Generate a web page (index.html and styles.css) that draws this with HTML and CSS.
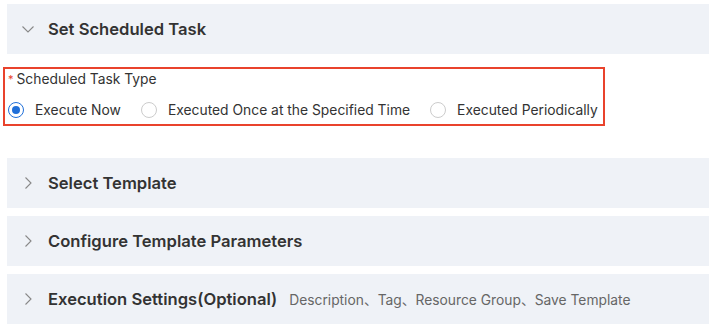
FILE: index.html
```html
<!DOCTYPE html>
<html lang="en">
<head>
  <meta charset="UTF-8" />
  <title>Set Scheduled Task</title>
  <link rel="stylesheet" href="styles.css">
</head>
<body>
  <div class="steps">
    <section class="step open">
      <div class="step-head">
        <svg class="chev" viewBox="0 0 12 12"><polyline points="0.5,3.5 6,9 11.5,3.5" /></svg>
        <h2>Set Scheduled Task</h2>
      </div>
      <div class="step-body">
        <div class="field">
          <label class="field-label"><span class="req">*</span>Scheduled Task Type</label>
          <div class="radios">
            <label class="radio checked"><span class="dot"></span>Execute Now</label>
            <label class="radio"><span class="dot"></span>Executed Once at the Specified Time</label>
            <label class="radio"><span class="dot"></span>Executed Periodically</label>
          </div>
        </div>
      </div>
    </section>

    <section class="step">
      <div class="step-head">
        <svg class="chev" viewBox="0 0 12 12"><polyline points="3.5,0.5 9,6 3.5,11.5" /></svg>
        <h2>Select Template</h2>
      </div>
    </section>

    <section class="step">
      <div class="step-head">
        <svg class="chev" viewBox="0 0 12 12"><polyline points="3.5,0.5 9,6 3.5,11.5" /></svg>
        <h2>Configure Template Parameters</h2>
      </div>
    </section>

    <section class="step">
      <div class="step-head">
        <svg class="chev" viewBox="0 0 12 12"><polyline points="3.5,0.5 9,6 3.5,11.5" /></svg>
        <h2>Execution Settings(Optional)</h2>
        <span class="hint">Description、Tag、Resource Group、Save Template</span>
      </div>
    </section>
  </div>
</body>
</html>
```

FILE: styles.css
```css
* {
  margin: 0;
  padding: 0;
  box-sizing: border-box;
}
body {
  font-family: Inter, "Noto Sans CJK SC", sans-serif;
  background: #fff;
  color: #333;
  padding: 4px 8px 0 7px;
}
.steps {
  width: 702px;
  display: flex;
  flex-direction: column;
  gap: 8px;
}
.step-head {
  height: 50px;
  background: #eff2f7;
  display: flex;
  align-items: center;
  padding-left: 15px;
  white-space: nowrap;
}
.chev {
  width: 12px;
  height: 12px;
  margin-right: 14px;
  fill: none;
  stroke: #888;
  stroke-width: 1.1;
}
.step-head h2 {
  font-size: 16.6px;
  font-weight: 600;
  color: #333;
}
.hint {
  margin-left: 12px;
  font-size: 13.8px;
  color: #666;
}
.step-body {
  padding: 13px 0 24px 0;
}
.field {
  margin-left: -4px;
  width: 602px;
  border: 2.5px solid #e9432c;
  padding: 1px 0 6px 3px;
}
.field-label {
  display: block;
  font-size: 13.8px;
  line-height: 18px;
  color: #333;
}
.req {
  color: #e9432c;
  font-size: 11px;
  vertical-align: top;
  margin-right: 3px;
}
.radios {
  display: flex;
  gap: 20px;
  margin-top: 14px;
  white-space: nowrap;
}
.radio {
  display: flex;
  align-items: center;
  flex-shrink: 0;
  font-size: 13.85px;
  color: #333;
}
.dot {
  width: 16px;
  height: 16px;
  border: 1px solid #ccc;
  border-radius: 50%;
  margin-right: 11px;
  position: relative;
}
.checked .dot {
  border-color: #1f6fd9;
}
.checked .dot::after {
  content: "";
  position: absolute;
  left: 3px;
  top: 3px;
  width: 8px;
  height: 8px;
  border-radius: 50%;
  background: #1f6fd9;
}
```
